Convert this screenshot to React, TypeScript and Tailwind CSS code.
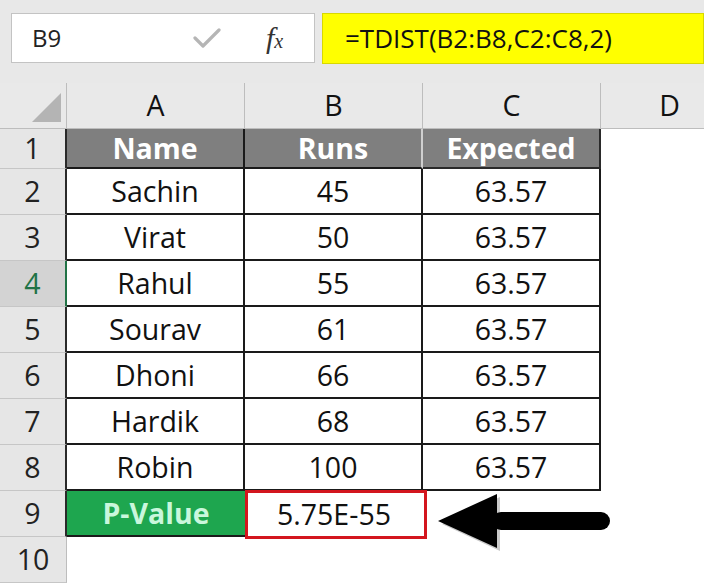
import React from "react"

const rows = [
  { name: "Sachin", runs: "45" },
  { name: "Virat", runs: "50" },
  { name: "Rahul", runs: "55" },
  { name: "Sourav", runs: "61" },
  { name: "Dhoni", runs: "66" },
  { name: "Hardik", runs: "68" },
  { name: "Robin", runs: "100" },
]

function RowHead({ n, active }: { n: number; active?: boolean }) {
  return (
    <div
      className={
        "flex items-center justify-center border-b border-[#c6c6c6] " +
        (active
          ? "bg-[#d3d3d3] text-[#217346] border-r-2 border-r-[#217346]"
          : n === 10
          ? "bg-[#e6e6e6] text-[#222] border-r border-r-[#bdbdbd]"
          : "bg-[#e6e6e6] text-[#222] border-r-2 border-r-[#2a2a2a]")
      }
    >
      {n}
    </div>
  )
}

function ColHead({ label }: { label: string }) {
  return (
    <div className="flex items-center justify-center bg-[#e9e9e9] border-r border-b border-[#bdbdbd] text-[#111]">
      {label}
    </div>
  )
}

export default function App() {
  return (
    <div className="relative w-[704px] h-[586px] overflow-hidden bg-white font-['Open_Sans','Noto_Sans',sans-serif] text-[28.5px]">
      {/* formula bar */}
      <div className="h-[83px] bg-[#e8e8e8] pt-[13px] pl-[11px] flex gap-[7px]">
        <div className="w-[304px] h-[50px] bg-white border border-[#c3c3c3] flex items-center">
          <span className="pl-[20px] w-[180px] text-[24px] text-[#222]">B9</span>
          <svg width="28" height="22" viewBox="0 0 28 22" className="ml-[1px]">
            <path d="M2 11 L10 19 L26 3" fill="none" stroke="#b5b5b5" strokeWidth="3.2" strokeLinecap="round" strokeLinejoin="round" />
          </svg>
          <span className="ml-[45px] font-['Liberation_Serif',serif] italic text-[30px] text-[#333] leading-none">
            f<span className="text-[20px]">x</span>
          </span>
        </div>
        <div className="flex-1 h-[51px] bg-[#ffff00] border border-[#d8d800] flex items-center pl-[22px] text-[26px] text-[#111]">
          =TDIST(B2:B8,C2:C8,2)
        </div>
      </div>

      {/* sheet */}
      <div className="relative grid grid-cols-[67px_178px_178px_178px_138px] grid-rows-[46px_40px_repeat(9,46px)]">
        <div className="relative bg-[#e9e9e9] border-r border-b border-[#bdbdbd]">
          <div className="absolute left-[32px] top-[10px] w-[29px] h-[29px] bg-[#b4b4b4] [clip-path:polygon(100%_0,100%_100%,0_100%)]" />
        </div>
        <ColHead label="A" />
        <ColHead label="B" />
        <ColHead label="C" />
        <ColHead label="D" />

        {/* row 1 */}
        <RowHead n={1} />
        <div className="flex items-center justify-center bg-[#7f7f7f] text-white font-bold border-r-2 border-b-2 border-[#1a1a1a]">
          Name
        </div>
        <div className="flex items-center justify-center bg-[#7f7f7f] text-white font-bold border-r-2 border-r-[#cfcfcf] border-b-2 border-b-[#1a1a1a]">
          Runs
        </div>
        <div className="flex items-center justify-center bg-[#7f7f7f] text-white font-bold border-r-2 border-b-2 border-[#2a2a2a]">
          Expected
        </div>
        <div />

        {rows.map((r, i) => (
          <React.Fragment key={r.name}>
            <RowHead n={i + 2} active={i + 2 === 4} />
            <div className="flex items-center justify-center border-r-2 border-b-2 border-[#1a1a1a] text-[#111]">
              {r.name}
            </div>
            <div className="flex items-center justify-center border-r-2 border-b-2 border-[#1a1a1a] text-[#111]">
              {r.runs}
            </div>
            <div className="flex items-center justify-center border-r-2 border-b-2 border-[#1a1a1a] text-[#111]">
              63.57
            </div>
            <div />
          </React.Fragment>
        ))}

        {/* row 9 */}
        <RowHead n={9} />
        <div className="flex items-center justify-center bg-[#1ea64f] text-[#c9f7dc] font-bold border-b-2 border-[#1a1a1a]">
          P-Value
        </div>
        <div className="relative flex items-center justify-center text-[#111]">
          <div className="absolute left-0 top-[-1px] w-[182px] h-[49px] border-[3px] border-[#d3161e]" />
          <span className="relative">5.75E-55</span>
        </div>
        <div />
        <div />

        {/* row 10 */}
        <RowHead n={10} />
        <div />
        <div />
        <div />
        <div />

        {/* arrow */}
        <svg
          className="absolute left-[432px] top-[407px]"
          width="184"
          height="62"
          viewBox="0 0 184 62"
        >
          <path d="M8 32 L66 5 L66 59 Z" fill="#2b2b2b" opacity="0.25" transform="translate(2 2)" />
          <path d="M6 31 L65 4 L65 58 Z" fill="#000" />
          <rect x="60" y="22" width="118" height="18" rx="9" fill="#000" />
        </svg>
      </div>
    </div>
  )
}
